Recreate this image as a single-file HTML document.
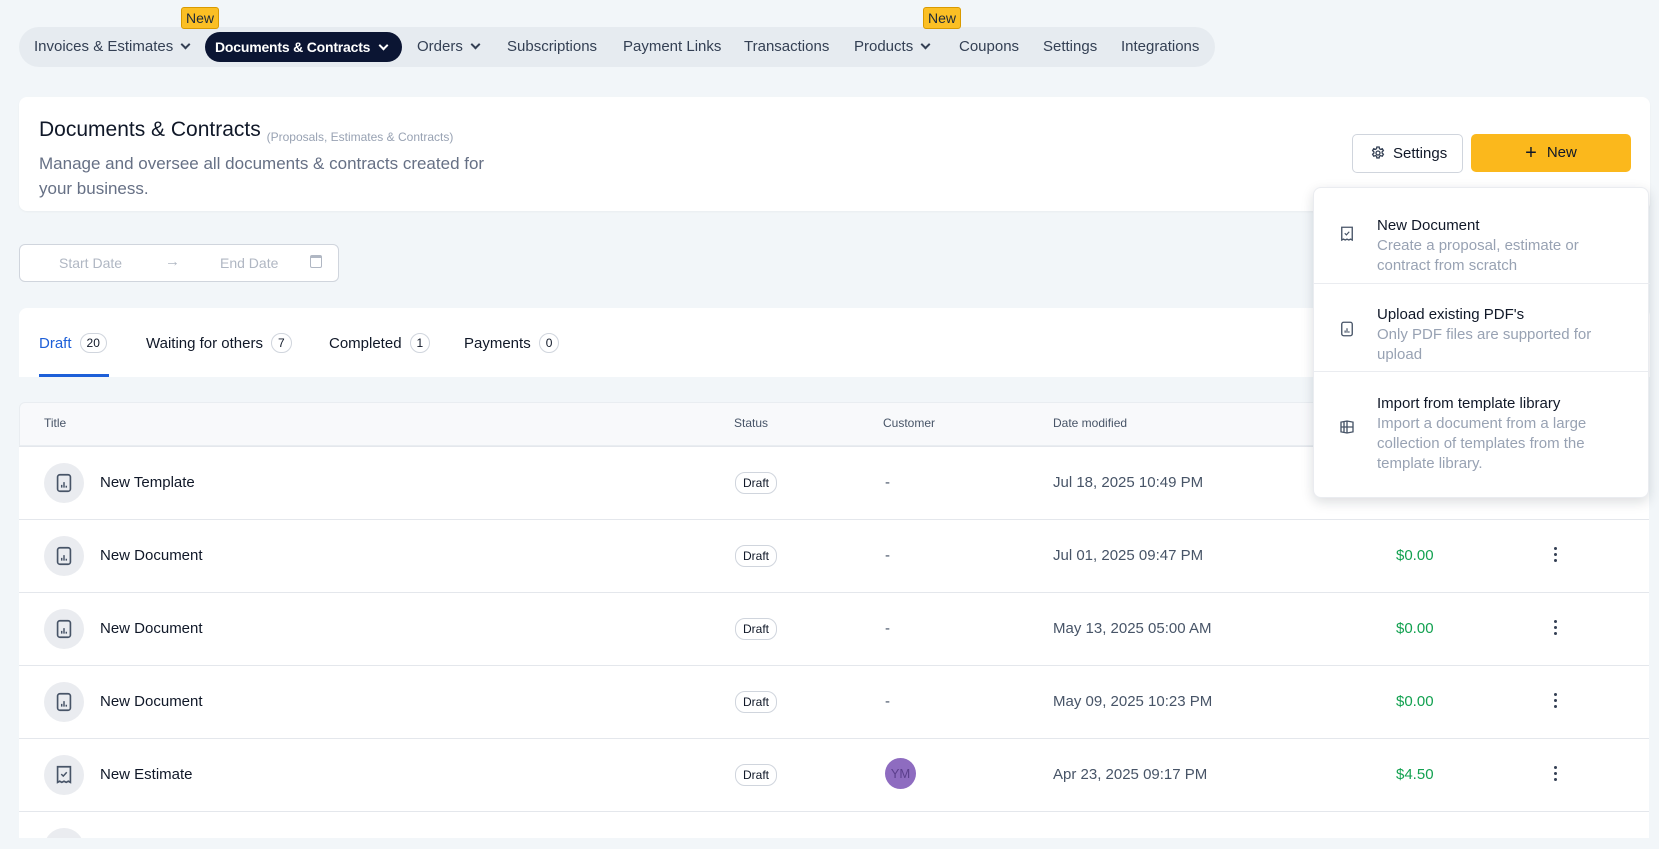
<!DOCTYPE html>
<html><head><meta charset="utf-8"><style>
*{box-sizing:border-box;margin:0;padding:0}
body{width:1659px;height:849px;overflow:hidden;background:#f2f6f9;font-family:"Liberation Sans",sans-serif;color:#101828;position:relative}
.abs{position:absolute}
.nav{left:19px;top:27px;width:1196px;height:40px;background:#e6ebf0;border-radius:20px}
.ni{position:absolute;top:38px;font-size:15px;color:#344054;white-space:nowrap}
.act{left:205px;top:32px;width:197px;height:30px;background:#0b1533;border-radius:15px}
.badge{top:7px;height:22px;background:#fbbf24;border:1px solid #d99a00;border-radius:3px;font-size:14px;color:#1d2939;padding:2px 4px;line-height:16px}
.card{background:#fff;border-radius:8px}
.chev{display:inline-block;width:7px;height:7px;border-right:2px solid currentColor;border-bottom:2px solid currentColor;transform:rotate(45deg);margin-left:9px;position:relative;top:-3px}
.tab{position:absolute;top:334px;font-size:15px;color:#101828}
.cnt{display:inline-block;border:1px solid #d0d5dd;border-radius:10px;font-size:12px;padding:2px 6px;margin-left:8px;position:relative;top:-1px}
.row{position:absolute;left:19px;width:1630px;height:73px;border-top:1px solid #e4e7ec;background:#fff}
.ic{position:absolute;left:25px;top:16px;width:40px;height:40px;border-radius:50%;background:#eaecf0}
.t{position:absolute;left:81px;top:27px;font-size:15px}
.st{position:absolute;left:716px;top:25px;border:1px solid #d0d5dd;border-radius:10px;font-size:12px;padding:3px 7px}
.cu{position:absolute;left:866px;top:27px;font-size:15px;color:#475467}
.dt{position:absolute;left:1034px;top:27px;font-size:15px;color:#475467}
.am{position:absolute;left:1377px;top:27px;font-size:15px;color:#12a150}
.dots{position:absolute;left:1535px;top:27px;width:4px}
.dots i{display:block;width:3px;height:3px;background:#344054;border-radius:50%;margin-bottom:3px}
.th{position:absolute;top:416px;font-size:12px;color:#475467}
.dd{left:1313px;top:187px;width:336px;height:311px;background:#fff;border-radius:8px;box-shadow:0 4px 12px rgba(16,24,40,.15);border:1px solid #eaecf0}
.di{position:absolute;left:0;width:336px}
.di b{display:block;font-weight:normal;font-size:15px;color:#101828;line-height:20px}
.di span{display:block;font-size:15px;color:#98a2b3;line-height:20px}
.dtx{position:absolute;left:63px}
.dic{position:absolute;left:24px}
</style></head><body>
<div class="abs nav"></div>
<div class="abs act"></div>
<div class="ni" style="left:34px">Invoices &amp; Estimates<span class="chev"></span></div>
<div class="ni" style="left:215px;top:39px;color:#fff;font-weight:bold;font-size:14px;letter-spacing:-0.2px">Documents &amp; Contracts<span class="chev" style="margin-left:10px"></span></div>
<div class="ni" style="left:417px">Orders<span class="chev"></span></div>
<div class="ni" style="left:507px">Subscriptions</div>
<div class="ni" style="left:623px">Payment Links</div>
<div class="ni" style="left:744px">Transactions</div>
<div class="ni" style="left:854px">Products<span class="chev"></span></div>
<div class="ni" style="left:959px">Coupons</div>
<div class="ni" style="left:1043px">Settings</div>
<div class="ni" style="left:1121px">Integrations</div>
<div class="abs badge" style="left:181px">New</div>
<div class="abs badge" style="left:923px">New</div>

<div class="abs card" style="left:19px;top:97px;width:1631px;height:114px;box-shadow:0 1px 2px rgba(0,0,0,.04)"></div>
<div class="abs" style="left:39px;top:118px;font-size:21px;color:#101828">Documents &amp; Contracts <span style="font-size:12px;color:#98a2b3;position:relative;top:5px">(Proposals, Estimates &amp; Contracts)</span></div>
<div class="abs" style="left:39px;top:151px;font-size:17px;color:#667085;line-height:25px;width:470px">Manage and oversee all documents &amp; contracts created for your business.</div>
<div class="abs" style="left:1352px;top:134px;width:111px;height:39px;border:1px solid #d0d5dd;border-radius:5px;background:#fff;font-size:15px;color:#101828;padding:10px 0 0 17px">
<svg width="16" height="16" viewBox="0 0 24 24" fill="none" stroke="#344054" stroke-width="2" style="vertical-align:-3px;margin-right:7px"><circle cx="12" cy="12" r="3"/><path d="M10.3 3h3.4l.5 2.5 1.8 1 2.4-.9 1.7 2.9-1.9 1.7v2l1.9 1.7-1.7 2.9-2.4-.9-1.8 1-.5 2.5h-3.4l-.5-2.5-1.8-1-2.4.9-1.7-2.9 1.9-1.7v-2L3.9 8.5l1.7-2.9 2.4.9 1.8-1z"/></svg>Settings</div>
<div class="abs" style="left:1471px;top:134px;width:160px;height:38px;background:#fbb81c;border-radius:5px;font-size:15px;color:#101828;text-align:center;line-height:38px"><span style="font-size:20px;vertical-align:-2px;margin-right:10px">+</span>New</div>

<div class="abs card" style="left:19px;top:244px;width:320px;height:38px;border:1px solid #d0d5dd;border-radius:6px"></div>
<div class="abs" style="left:59px;top:255px;font-size:14px;color:#b0b7c3">Start Date</div>
<div class="abs" style="left:165px;top:253px;font-size:15px;color:#b0b7c3">→</div>
<div class="abs" style="left:220px;top:255px;font-size:14px;color:#b0b7c3">End Date</div>
<div class="abs" style="left:310px;top:255px;width:12px;height:13px;border:1.5px solid #b0b7c3;border-radius:2px;border-top-width:3px"></div>

<div class="abs card" style="left:19px;top:308px;width:1631px;height:69px;border-radius:8px 8px 0 0"></div>
<div class="tab" style="left:39px;color:#1d5fd8">Draft<span class="cnt" style="color:#101828">20</span></div>
<div class="tab" style="left:146px">Waiting for others<span class="cnt">7</span></div>
<div class="tab" style="left:329px">Completed<span class="cnt">1</span></div>
<div class="tab" style="left:464px">Payments<span class="cnt">0</span></div>
<div class="abs" style="left:39px;top:374px;width:70px;height:3px;background:#1d5fd8"></div>

<div class="abs" style="left:19px;top:402px;width:1630px;height:44px;background:#f8f9fb;border:1px solid #e9edf1;border-radius:6px 6px 0 0"></div>
<div class="th" style="left:44px">Title</div>
<div class="th" style="left:734px">Status</div>
<div class="th" style="left:883px">Customer</div>
<div class="th" style="left:1053px">Date modified</div>

<svg width="0" height="0" style="position:absolute"><defs>
<symbol id="doc" viewBox="0 0 24 24"><rect x="5" y="3" width="14" height="18" rx="2.5" fill="none" stroke="#475467" stroke-width="1.8"/><path d="M9.5 17v-3M12 17v-6M14.5 17v-2" stroke="#475467" stroke-width="1.6"/></symbol>
<symbol id="est" viewBox="0 0 24 24"><path d="M5 3h14v17l-2.3-1.2-2.3 1.2-2.4-1.2-2.4 1.2-2.3-1.2L5 20z" fill="none" stroke="#475467" stroke-width="1.8"/><path d="M9 11l2.2 2.2L15 9" fill="none" stroke="#475467" stroke-width="1.6"/></symbol>
<symbol id="lib" viewBox="0 0 24 24"><path d="M4 5.5l8-1.5 8 1.5v13l-8 1.5-8-1.5z M12 4v16 M4 12h16 M8 4.8v14.4" fill="none" stroke="#475467" stroke-width="1.8"/></symbol>
</defs></svg>

<div class="row" style="top:446px"><div class="ic"><svg width="22" height="22" style="margin:9px"><use href="#doc"/></svg></div><div class="t">New Template</div><div class="st">Draft</div><div class="cu">-</div><div class="dt">Jul 18, 2025 10:49 PM</div></div>
<div class="row" style="top:519px"><div class="ic"><svg width="22" height="22" style="margin:9px"><use href="#doc"/></svg></div><div class="t">New Document</div><div class="st">Draft</div><div class="cu">-</div><div class="dt">Jul 01, 2025 09:47 PM</div><div class="am">$0.00</div><div class="dots"><i></i><i></i><i></i></div></div>
<div class="row" style="top:592px"><div class="ic"><svg width="22" height="22" style="margin:9px"><use href="#doc"/></svg></div><div class="t">New Document</div><div class="st">Draft</div><div class="cu">-</div><div class="dt">May 13, 2025 05:00 AM</div><div class="am">$0.00</div><div class="dots"><i></i><i></i><i></i></div></div>
<div class="row" style="top:665px"><div class="ic"><svg width="22" height="22" style="margin:9px"><use href="#doc"/></svg></div><div class="t">New Document</div><div class="st">Draft</div><div class="cu">-</div><div class="dt">May 09, 2025 10:23 PM</div><div class="am">$0.00</div><div class="dots"><i></i><i></i><i></i></div></div>
<div class="row" style="top:738px"><div class="ic"><svg width="22" height="22" style="margin:9px"><use href="#est"/></svg></div><div class="t">New Estimate</div><div class="st">Draft</div><div style="position:absolute;left:866px;top:19px;width:31px;height:31px;border-radius:50%;background:#8e6cc0;color:#5b3f8c;font-size:13px;text-align:center;line-height:31px">YM</div><div class="dt">Apr 23, 2025 09:17 PM</div><div class="am">$4.50</div><div class="dots"><i></i><i></i><i></i></div></div>
<div class="row" style="top:811px;height:27px;overflow:hidden"><div class="ic"></div></div>

<div class="abs dd">
<div class="di" style="top:0;height:96px;border-bottom:1px solid #eaecf0"><svg class="dic" width="18" height="18" style="top:37px"><use href="#est"/></svg><div class="dtx" style="top:28px"><b>New Document</b><span>Create a proposal, estimate or<br>contract from scratch</span></div></div>
<div class="di" style="top:96px;height:88px;border-bottom:1px solid #eaecf0"><svg class="dic" width="18" height="18" style="top:36px"><use href="#doc"/></svg><div class="dtx" style="top:21px"><b>Upload existing PDF's</b><span>Only PDF files are supported for<br>upload</span></div></div>
<div class="di" style="top:184px;height:120px"><svg class="dic" width="18" height="18" style="top:46px"><use href="#lib"/></svg><div class="dtx" style="top:22px"><b>Import from template library</b><span>Import a document from a large<br>collection of templates from the<br>template library.</span></div></div>
</div>
</body></html>
